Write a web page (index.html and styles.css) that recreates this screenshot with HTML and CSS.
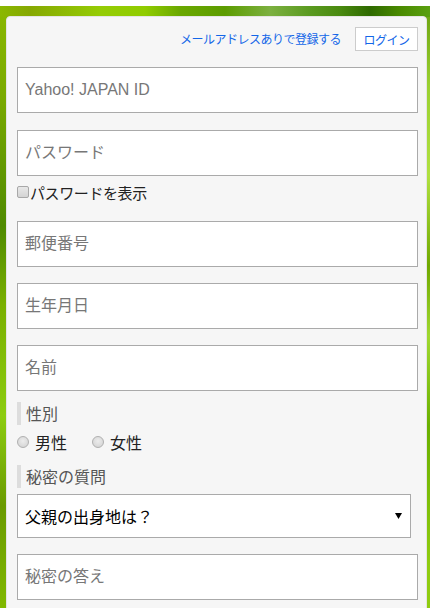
FILE: index.html
```html
<!DOCTYPE html>
<html lang="ja">
<head>
<meta charset="utf-8">
<title>登録</title>
<link rel="stylesheet" href="styles.css">
</head>
<body>
<div class="bg">
  <form class="card">
    <div class="topbar">
      <a class="reg" href="#">メールアドレスありで登録する</a>
      <a class="login" href="#">ログイン</a>
    </div>
    <input class="box first" type="text" placeholder="Yahoo! JAPAN ID">
    <input class="box pw" type="password" placeholder="パスワード">
    <label class="check"><span class="cb"></span>パスワードを表示</label>
    <input class="box postal" type="text" placeholder="郵便番号">
    <input class="box gap" type="text" placeholder="生年月日">
    <input class="box gap" type="text" placeholder="名前">
    <div class="label lab-gender">性別</div>
    <div class="radios">
      <label class="radio"><span class="rd"></span>男性</label>
      <label class="radio"><span class="rd"></span>女性</label>
    </div>
    <div class="label lab-secret">秘密の質問</div>
    <div class="select">
      <span>父親の出身地は？</span>
      <svg class="arrow" width="7" height="6" viewBox="0 0 7 6"><path d="M0 0H7L3.5 6Z" fill="#000"/></svg>
    </div>
    <input class="box gap" type="text" placeholder="秘密の答え">
  </form>
</div>
</body>
</html>
```
FILE: styles.css
```css
html, body {
  margin: 0;
  padding: 0;
  background: #fff;
  height: 100%;
  overflow: hidden;
}
body {
  font-family: "Noto Sans CJK JP", "Liberation Sans", sans-serif;
}
.bg {
  margin-top: 6px;
  height: 700px;
  padding: 10px 3px 0 6px;
  background:
    linear-gradient(to right, #8ab800 0px, #86a802 30px, #95cc05 100px, #90cc00 145px, #6aa800 180px, #5c9c00 225px, #7cb040 270px, #5a9a20 310px, #4a8a10 340px, #2f6a00 370px, #4a8a00 400px, #5aa010 430px) top left / 100% 11px no-repeat,
    linear-gradient(to bottom, #8ab800 0px, #7aaa00 90px, #4f8a00 220px, #7ab000 300px, #8ccc10 410px, #6a9a00 500px, #80b800 600px) left top / 6px 100% no-repeat,
    linear-gradient(to bottom, #6aa010 0px, #9ad030 80px, #b0e040 170px, #70a800 260px, #a0d830 330px, #6ab000 420px, #90cc10 560px) right top / 4px 100% no-repeat,
    #7ab000;
}
.card {
  box-sizing: border-box;
  width: 421px;
  margin: 0;
  background: #f6f6f6;
  border: 1px solid #e4e4e4;
  border-radius: 4px;
  padding: 10px 8px 20px 10px;
  display: flex;
  flex-direction: column;
}
.topbar {
  display: flex;
  justify-content: flex-end;
  align-items: center;
  gap: 14px;
  height: 24px;
}
.topbar a {
  color: #1366e8;
  text-decoration: none;
  font-size: 12px;
  letter-spacing: -0.5px;
}
.reg {
  line-height: 24px;
}
.login {
  box-sizing: border-box;
  height: 24px;
  width: 63px;
  border: 1px solid #cccccc;
  background: #fff;
  display: flex;
  align-items: center;
  justify-content: center;
}
.box {
  box-sizing: border-box;
  display: block;
  width: 401px;
  height: 46px;
  margin: 0;
  border: 1px solid #aaaaaa;
  border-radius: 0;
  background: #fff;
  padding: 0 7px;
  font-family: "Liberation Sans", "Noto Sans CJK JP", sans-serif;
  font-size: 16px;
  color: #000;
  outline: none;
}
.box::placeholder {
  color: #777777;
  opacity: 1;
}
.first { margin-top: 16px; }
.pw { margin-top: 17px; }
.postal { margin-top: 18px; }
.gap { margin-top: 16px; }
.check {
  display: flex;
  align-items: center;
  height: 22px;
  margin-top: 5px;
  font-size: 15px;
  letter-spacing: -0.4px;
  color: #222;
}
.cb {
  box-sizing: border-box;
  width: 12px;
  height: 12px;
  border: 1px solid #a8a8a8;
  border-radius: 2px;
  background: linear-gradient(#e8e8e8, #d4d4d4);
  margin-right: 1px;
}
.label {
  box-sizing: border-box;
  height: 23px;
  line-height: 23px;
  border-left: 4px solid #dddddd;
  padding-left: 5px;
  font-size: 16px;
  color: #555;
}
.lab-gender { margin-top: 11px; }
.lab-secret { margin-top: 12px; }
.radios {
  display: flex;
  gap: 25px;
  height: 22px;
  margin-top: 6px;
  align-items: center;
}
.radio {
  display: flex;
  align-items: center;
  gap: 6px;
  font-size: 16px;
  color: #222;
}
.rd {
  box-sizing: border-box;
  width: 12px;
  height: 12px;
  border: 1px solid #b0b0b0;
  border-radius: 50%;
  background: radial-gradient(circle at 50% 40%, #ececec, #d0d0d0);
}
.select {
  box-sizing: border-box;
  width: 394px;
  height: 44px;
  margin-top: 6px;
  border: 1px solid #aaaaaa;
  background: #fff;
  display: flex;
  align-items: center;
  justify-content: space-between;
  padding: 0 8px 0 7px;
  font-size: 16px;
  color: #000;
}
.arrow {
  display: block;
}
```
